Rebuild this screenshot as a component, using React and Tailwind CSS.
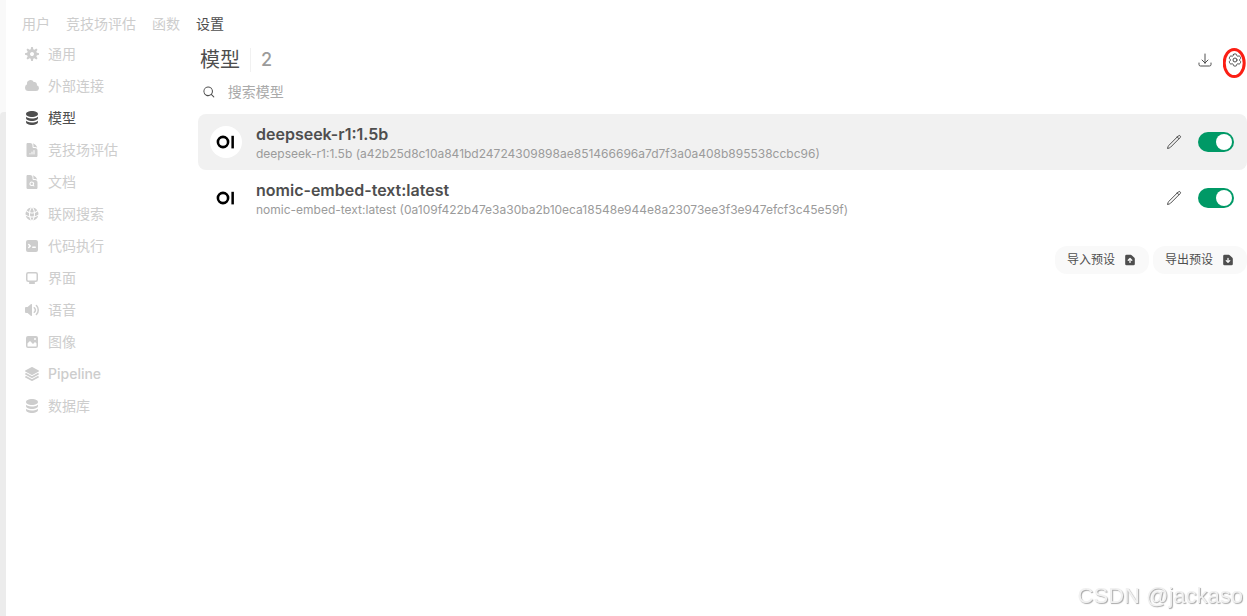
import React, { useState } from "react";
import {
  HiDocumentChartBar,
  HiDocumentMagnifyingGlass,
  HiGlobeAlt,
  HiOutlineArrowDownTray,
  HiOutlineCog6Tooth,
  HiOutlinePencil,
  HiSquare3Stack3D,
} from "react-icons/hi2";

const paths = {
  cog: "M6.955 1.45A.5.5 0 0 1 7.452 1h1.096a.5.5 0 0 1 .497.45l.17 1.699c.484.12.94.312 1.356.562l1.321-1.081a.5.5 0 0 1 .67.033l.774.775a.5.5 0 0 1 .034.67l-1.08 1.32c.25.417.44.873.561 1.357l1.699.17a.5.5 0 0 1 .45.497v1.096a.5.5 0 0 1-.45.497l-1.699.17c-.12.484-.312.94-.562 1.356l1.082 1.322a.5.5 0 0 1-.034.67l-.774.774a.5.5 0 0 1-.67.033l-1.322-1.08c-.416.25-.872.44-1.356.561l-.17 1.699a.5.5 0 0 1-.497.45H7.452a.5.5 0 0 1-.497-.45l-.17-1.699a4.973 4.973 0 0 1-1.356-.562L4.108 13.37a.5.5 0 0 1-.67-.033l-.774-.775a.5.5 0 0 1-.034-.67l1.08-1.32a4.971 4.971 0 0 1-.561-1.357l-1.699-.17A.5.5 0 0 1 1 8.548V7.452a.5.5 0 0 1 .45-.497l1.699-.17c.12-.484.312-.94.562-1.356L2.629 4.107a.5.5 0 0 1 .034-.67l.774-.774a.5.5 0 0 1 .67-.033L5.43 3.71a4.97 4.97 0 0 1 1.356-.561l.17-1.699ZM6 8c0 .538.212 1.026.558 1.385l.057.057a2 2 0 0 0 2.828-2.828l-.058-.056A2 2 0 0 0 6 8Z",
  cloud:
    "M1 9.5A3.5 3.5 0 0 0 4.5 13H12a3 3 0 0 0 .917-5.857 2.503 2.503 0 0 0-3.198-3.019 3.5 3.5 0 0 0-6.628 2.171A3.5 3.5 0 0 0 1 9.5Z",
  stack:
    "M8 7c3.314 0 6-1.343 6-3s-2.686-3-6-3-6 1.343-6 3 2.686 3 6 3Z M8 8.5c1.84 0 3.579-.37 4.914-1.037A6.33 6.33 0 0 0 14 6.78V8c0 1.657-2.686 3-6 3S2 9.657 2 8V6.78c.346.273.72.5 1.087.683C4.42 8.131 6.16 8.5 8 8.5Z M8 12.5c1.84 0 3.579-.37 4.914-1.037.366-.183.74-.41 1.086-.684V12c0 1.657-2.686 3-6 3s-6-1.343-6-3v-1.22c.346.273.72.5 1.087.683C4.42 12.131 6.16 12.5 8 12.5Z",
  terminal:
    "M2 4a2 2 0 0 1 2-2h8a2 2 0 0 1 2 2v8a2 2 0 0 1-2 2H4a2 2 0 0 1-2-2V4Zm2.22 1.97a.75.75 0 0 0 0 1.06l.97.97-.97.97a.75.75 0 1 0 1.06 1.06l1.5-1.5a.75.75 0 0 0 0-1.06l-1.5-1.5a.75.75 0 0 0-1.06 0ZM8.75 8.5a.75.75 0 0 0 0 1.5h2.5a.75.75 0 0 0 0-1.5h-2.5Z",
  desktop:
    "M2 4.25A2.25 2.25 0 0 1 4.25 2h7.5A2.25 2.25 0 0 1 14 4.25v5.5A2.25 2.25 0 0 1 11.75 12h-1.312c.1.128.21.248.328.36a.75.75 0 0 1 .234.545v.345a.75.75 0 0 1-.75.75h-4.5a.75.75 0 0 1-.75-.75v-.345a.75.75 0 0 1 .234-.545c.118-.111.228-.232.328-.36H4.25A2.25 2.25 0 0 1 2 9.75v-5.5Zm2.25-.75a.75.75 0 0 0-.75.75v5.5c0 .414.336.75.75.75h7.5a.75.75 0 0 0 .75-.75v-5.5a.75.75 0 0 0-.75-.75h-7.5Z",
  speaker:
    "M7.557 2.066A.75.75 0 0 1 8 2.75v10.5a.75.75 0 0 1-1.248.56L3.59 11H2a1 1 0 0 1-1-1V6a1 1 0 0 1 1-1h1.59l3.162-2.81a.75.75 0 0 1 .805-.124ZM12.95 3.05a.75.75 0 1 0-1.06 1.06 5.5 5.5 0 0 1 0 7.78.75.75 0 1 0 1.06 1.06 7 7 0 0 0 0-9.9Z M10.828 5.172a.75.75 0 1 0-1.06 1.06 2.5 2.5 0 0 1 0 3.536.75.75 0 1 0 1.06 1.06 4 4 0 0 0 0-5.656Z",
  photo:
    "M2 4a2 2 0 0 1 2-2h8a2 2 0 0 1 2 2v8a2 2 0 0 1-2 2H4a2 2 0 0 1-2-2V4Zm10.5 5.707a.5.5 0 0 0-.146-.353l-1-1a.5.5 0 0 0-.708 0L9.354 9.646a.5.5 0 0 1-.708 0L6.354 7.354a.5.5 0 0 0-.708 0l-2 2a.5.5 0 0 0-.146.353V12a.5.5 0 0 0 .5.5h8a.5.5 0 0 0 .5-.5V9.707ZM12 5a1 1 0 1 1-2 0 1 1 0 0 1 2 0Z",
  docUp:
    "M4 2a1.5 1.5 0 0 0-1.5 1.5v9A1.5 1.5 0 0 0 4 14h8a1.5 1.5 0 0 0 1.5-1.5V6.621a1.5 1.5 0 0 0-.44-1.06L9.94 2.439A1.5 1.5 0 0 0 8.878 2H4Zm4 9.5a.75.75 0 0 1-.75-.75V8.06l-.72.72a.75.75 0 0 1-1.06-1.06l2-2a.75.75 0 0 1 1.06 0l2 2a.75.75 0 1 1-1.06 1.06l-.72-.72v2.69a.75.75 0 0 1-.75.75Z",
  docDown:
    "M4 2a1.5 1.5 0 0 0-1.5 1.5v9A1.5 1.5 0 0 0 4 14h8a1.5 1.5 0 0 0 1.5-1.5V6.621a1.5 1.5 0 0 0-.44-1.06L9.94 2.439A1.5 1.5 0 0 0 8.878 2H4Zm4 3.5a.75.75 0 0 1 .75.75v2.69l.72-.72a.75.75 0 1 1 1.06 1.06l-2 2a.75.75 0 0 1-1.06 0l-2-2a.75.75 0 0 1 1.06-1.06l.72.72V6.25A.75.75 0 0 1 8 5.5Z",
};

function SolidIcon({ name, className = "size-4" }) {
  return (
    <svg viewBox="0 0 16 16" fill="currentColor" className={className} aria-hidden="true">
      <path fillRule="evenodd" clipRule="evenodd" d={paths[name]} />
    </svg>
  );
}

const tabs = ["用户", "竞技场评估", "函数", "设置"];

const sections = [
  { label: "通用", icon: <SolidIcon name="cog" /> },
  { label: "外部连接", icon: <SolidIcon name="cloud" /> },
  { label: "模型", icon: <SolidIcon name="stack" /> },
  { label: "竞技场评估", icon: <HiDocumentChartBar className="size-4" /> },
  { label: "文档", icon: <HiDocumentMagnifyingGlass className="size-4" /> },
  { label: "联网搜索", icon: <HiGlobeAlt className="size-4" /> },
  { label: "代码执行", icon: <SolidIcon name="terminal" /> },
  { label: "界面", icon: <SolidIcon name="desktop" /> },
  { label: "语音", icon: <SolidIcon name="speaker" /> },
  { label: "图像", icon: <SolidIcon name="photo" /> },
  { label: "Pipeline", icon: <HiSquare3Stack3D className="size-4" /> },
  { label: "数据库", icon: <SolidIcon name="stack" /> },
];

const models = [
  {
    name: "deepseek-r1:1.5b",
    digest: "a42b25d8c10a841bd24724309898ae851466696a7d7f3a0a408b895538ccbc96",
    active: true,
  },
  {
    name: "nomic-embed-text:latest",
    digest: "0a109f422b47e3a30ba2b10eca18548e944e8a23073ee3f3e947efcf3c45e59f",
    active: false,
  },
];

function Logo() {
  return (
    <span className="size-8 shrink-0 rounded-full bg-white">
      <svg viewBox="0 0 32 32" className="size-8" aria-hidden="true">
        <circle cx="13" cy="16" r="5.1" fill="none" stroke="#000" strokeWidth="2.6" />
        <rect x="21.4" y="9.8" width="2.5" height="12.6" fill="#000" />
      </svg>
    </span>
  );
}

function ModelRow({ model }) {
  const [enabled, setEnabled] = useState(true);

  return (
    <li
      className={`flex h-14 items-center rounded-lg px-3 ${model.active ? "bg-[#f1f1f1]" : "bg-white"}`}
    >
      <Logo />
      <div className="ml-3.5 min-w-0 flex-1 pt-1">
        <div className="truncate text-base leading-5 font-semibold text-[#4e4e4e]">
          {model.name}
        </div>
        <div className="truncate text-xs leading-5 text-[#9b9b9b]">
          {model.name} ({model.digest})
        </div>
      </div>
      <button type="button" aria-label={`编辑 ${model.name}`} className="p-2 text-[#4e4e4e]">
        <HiOutlinePencil className="size-4" />
      </button>
      <label className="ml-2 flex cursor-pointer pr-px">
        <input
          type="checkbox"
          role="switch"
          aria-label={model.name}
          checked={enabled}
          onChange={() => setEnabled(!enabled)}
          className="peer sr-only"
        />
        <span className="flex h-5 w-9 items-center rounded-full bg-gray-200 px-0.5 peer-checked:justify-end peer-checked:bg-emerald-600">
          <span className="size-4 rounded-full bg-white" />
        </span>
      </label>
    </li>
  );
}

function PresetButton({ label, icon }) {
  return (
    <button
      type="button"
      className="flex h-7 items-center gap-2 rounded-xl bg-[#f9f9f9] px-3 text-xs text-[#4e4e4e]"
    >
      {label}
      <SolidIcon name={icon} className="size-3.5" />
    </button>
  );
}

export default function App() {
  const [tab, setTab] = useState("设置");
  const [section, setSection] = useState("模型");
  const [query, setQuery] = useState("");

  const shown = models.filter((m) => m.name.includes(query));

  return (
    <div className="flex min-h-screen bg-white font-['Inter','Noto_Sans_CJK_SC',sans-serif]">
      {/* Edge of the collapsed chat list */}
      <div className="flex w-1.5 shrink-0 flex-col bg-[#f9f9f9] pt-28">
        <div className="flex-1 rounded-tl-sm bg-[#ececec]" />
      </div>

      <div className="min-w-0 flex-1">
        <nav className="flex items-center gap-4 px-4 pt-3.5 pb-1 text-sm">
          {tabs.map((t) => (
            <a
              key={t}
              href="#"
              onClick={() => setTab(t)}
              className={t === tab ? "text-[#4e4e4e]" : "text-[#cdcdcd]"}
            >
              {t}
            </a>
          ))}
        </nav>

        <div className="flex">
          <nav className="flex w-48 shrink-0 flex-col px-4">
            {sections.map((s) => (
              <button
                key={s.label}
                type="button"
                onClick={() => setSection(s.label)}
                className={`flex h-8 items-center gap-2 px-0.5 text-sm ${s.label === "Pipeline" ? "font-medium" : "font-normal"} ${s.label === section ? "text-[#4e4e4e]" : "text-[#cdcdcd]"}`}
              >
                {s.icon}
                {s.label}
              </button>
            ))}
          </nav>

          <main className="min-w-0 flex-1 pt-0.5">
            <div className="flex h-10 items-center justify-between pl-0.5">
              <h1 className="flex items-center text-xl text-[#4e4e4e]">
                模型
                <span className="mx-2.5 h-6 w-px bg-[#f1f1f1]" />
                <span className="text-lg font-medium text-[#9b9b9b]">2</span>
              </h1>
              <div className="flex items-center gap-3.5 pr-1 text-[#4e4e4e]">
                <button type="button" aria-label="导出">
                  <HiOutlineArrowDownTray className="size-4" />
                </button>
                <button type="button" aria-label="设置" className="relative">
                  <HiOutlineCog6Tooth className="size-4" />
                  {/* Hand-drawn highlight around the gear */}
                  <svg
                    viewBox="0 0 24 32"
                    className="pointer-events-none absolute -top-1 -left-1 h-8 w-6 max-w-none"
                    aria-hidden="true"
                  >
                    <ellipse
                      cx="11.2"
                      cy="15"
                      rx="10"
                      ry="13.5"
                      fill="none"
                      stroke="#fb1e14"
                      strokeWidth="3"
                    />
                  </svg>
                </button>
              </div>
            </div>

            <label className="flex h-6 items-center gap-3 pl-1 text-[#4e4e4e]">
              <svg viewBox="0 0 20 20" fill="currentColor" className="size-3.5" aria-hidden="true">
                <path
                  fillRule="evenodd"
                  d="M9 3.5a5.5 5.5 0 100 11 5.5 5.5 0 000-11zM2 9a7 7 0 1112.452 4.391l3.328 3.329a.75.75 0 11-1.06 1.06l-3.329-3.328A7 7 0 012 9z"
                />
              </svg>
              <input
                type="text"
                aria-label="搜索模型"
                placeholder="搜索模型"
                value={query}
                onChange={(e) => setQuery(e.target.value)}
                className="w-full bg-transparent text-sm outline-none placeholder:text-[#aaaaaa]"
              />
            </label>

            <ul className="mt-2.5">
              {shown.map((m) => (
                <ModelRow key={m.name} model={m} />
              ))}
            </ul>

            <div className="mt-5 flex justify-end gap-1">
              <PresetButton label="导入预设" icon="docUp" />
              <PresetButton label="导出预设" icon="docDown" />
            </div>
          </main>
        </div>
      </div>

      <div className="pointer-events-none fixed right-1 bottom-1 font-['Liberation_Sans',sans-serif] text-[22px] leading-8 text-[#f1f1f1] [text-shadow:1px_1px_1px_#a8a8a8]">
        CSDN @jackaso
      </div>
    </div>
  );
}
